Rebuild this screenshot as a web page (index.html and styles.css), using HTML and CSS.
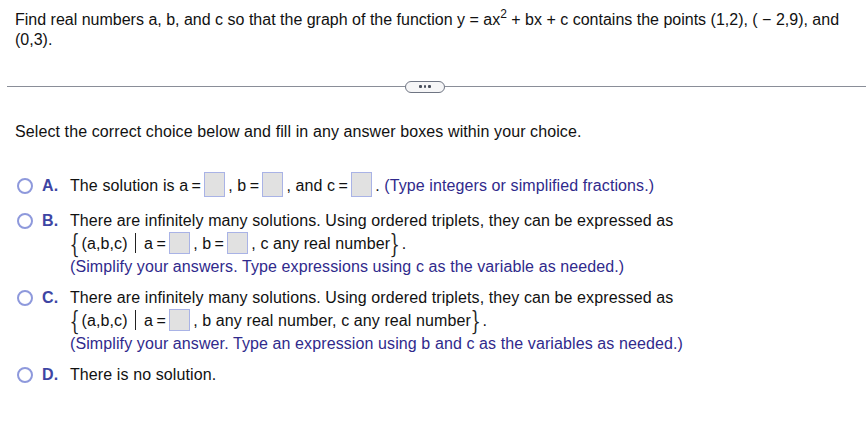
FILE: index.html
```html
<!DOCTYPE html>
<html>
<head>
<meta charset="utf-8">
<link rel="stylesheet" href="styles.css">
</head>
<body>
<div class="page">
  <p class="question">Find real numbers a, b, and c so that the graph of the function y = ax<sup>2</sup> + bx + c contains the points (1,2), ( &#8722; 2,9), and (0,3).</p>

  <div class="divider">
    <span class="rule rule-left"></span>
    <span class="pill"><i></i><i></i><i></i></span>
    <span class="rule rule-right"></span>
  </div>

  <p class="prompt">Select the correct choice below and fill in any answer boxes within your choice.</p>

  <div class="choices">
    <div class="choice choice-a">
      <span class="radio"></span>
      <span class="letter">A.</span>
      <div class="body">
        <div class="line">The solution is a&#8201;=&#8201;<span class="box tall"></span>, b&#8201;=&#8201;<span class="box tall"></span>, and c&#8201;=&#8201;<span class="box tall"></span>. <span class="hint">(Type integers or simplified fractions.)</span></div>
      </div>
    </div>

    <div class="choice">
      <span class="radio"></span>
      <span class="letter">B.</span>
      <div class="body">
        <div class="line">There are infinitely many solutions. Using ordered triplets, they can be expressed as</div>
        <div class="line"><span class="brace">{</span>(a,b,c)<span class="bar"></span>a&#8201;=&#8201;<span class="box"></span>, b&#8201;=&#8201;<span class="box"></span>, c any real number<span class="brace">}</span>.</div>
        <div class="line hint">(Simplify your answers. Type expressions using c as the variable as needed.)</div>
      </div>
    </div>

    <div class="choice">
      <span class="radio"></span>
      <span class="letter">C.</span>
      <div class="body">
        <div class="line">There are infinitely many solutions. Using ordered triplets, they can be expressed as</div>
        <div class="line"><span class="brace">{</span>(a,b,c)<span class="bar"></span>a&#8201;=&#8201;<span class="box"></span>, b any real number, c any real number<span class="brace">}</span>.</div>
        <div class="line hint">(Simplify your answer. Type an expression using b and c as the variables as needed.)</div>
      </div>
    </div>

    <div class="choice">
      <span class="radio"></span>
      <span class="letter">D.</span>
      <div class="body">
        <div class="line">There is no solution.</div>
      </div>
    </div>
  </div>
</div>
</body>
</html>
```

FILE: styles.css
```css
html, body {
  margin: 0;
  padding: 0;
  background: #ffffff;
}

body {
  font-family: "Liberation Sans", Arial, sans-serif;
  font-size: 16px;
  letter-spacing: 0.1px;
  color: #111111;
}

.page {
  width: 866px;
}

.question {
  margin: 0;
  padding: 10px 8px 0 15px;
  line-height: 20px;
  letter-spacing: 0;
}

.question sup {
  font-size: 12px;
  line-height: 0;
  vertical-align: 7px;
}

.divider {
  display: flex;
  align-items: center;
  margin: 31px 0 0 7px;
  height: 11px;
}

.rule {
  height: 1px;
  background: #8a8e98;
}

.rule-left {
  width: 398px;
}

.rule-right {
  flex: 1;
}

.pill {
  box-sizing: border-box;
  width: 40px;
  height: 12px;
  border: 1.5px solid #6f7583;
  border-radius: 6px;
  background: #f6f6f7;
  display: flex;
  align-items: center;
  justify-content: center;
  gap: 2px;
}

.pill i {
  display: block;
  width: 2.5px;
  height: 2.5px;
  background: #4a4f5c;
  border-radius: 1px;
}

.prompt {
  margin: 30px 0 0 15px;
  line-height: 20px;
}

.choices {
  margin-top: 31px;
  padding-left: 17px;
  display: flex;
  flex-direction: column;
  gap: 8px;
}

.choice {
  display: flex;
  align-items: flex-start;
}

.choice-a {
  margin-bottom: 3px;
}

.radio {
  box-sizing: border-box;
  flex: none;
  width: 16px;
  height: 16px;
  border: 2px solid #8e99dc;
  border-radius: 50%;
  margin-top: 4px;
}

.choice-a .radio {
  margin-top: 5px;
}

.letter {
  flex: none;
  width: 28px;
  margin-left: 9px;
  font-weight: bold;
  color: #3d45a3;
  line-height: 23px;
}

.choice-a .letter,
.choice-a .line {
  line-height: 25px;
}

.body {
  display: flex;
  flex-direction: column;
}

.line {
  line-height: 23px;
  white-space: nowrap;
}

.hint {
  color: #302a8c;
}

.box {
  box-sizing: border-box;
  display: inline-block;
  width: 21px;
  height: 22px;
  background: #e1e1e1;
  border: 1px solid #a9b3e6;
  vertical-align: middle;
  margin: -4px 3px 0 0;
}

.box.tall {
  height: 25px;
}

.brace {
  display: inline-block;
  font-family: "DejaVu Serif", "Liberation Serif", serif;
  font-size: 18px;
  font-weight: normal;
  line-height: 0;
  vertical-align: -1px;
  transform: scale(0.9, 1.45);
  color: #222222;
  margin: 0 1px 0 -1px;
}

.bar {
  display: inline-block;
  width: 1.5px;
  height: 20px;
  background: #222222;
  vertical-align: middle;
  margin: -4px 8px 0 7px;
}
```
